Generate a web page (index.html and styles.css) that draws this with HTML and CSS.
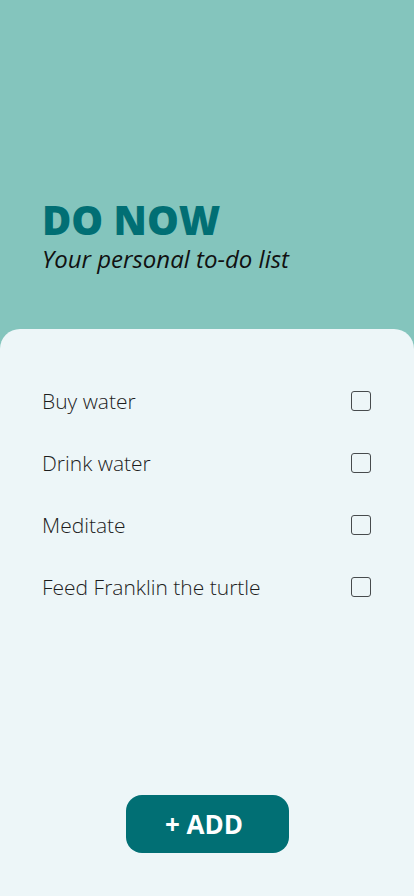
FILE: index.html
```html
<!DOCTYPE html>
<html lang="en">
<head>
<meta charset="utf-8">
<title>Do Now</title>
<link rel="stylesheet" href="styles.css">
</head>
<body>
<div class="app">
  <header class="header">
    <h1 class="title">DO NOW</h1>
    <p class="subtitle">Your personal to-do list</p>
  </header>
  <main class="card">
    <ul class="list">
      <li class="item"><span class="label">Buy water</span><span class="check"></span></li>
      <li class="item"><span class="label">Drink water</span><span class="check"></span></li>
      <li class="item"><span class="label">Meditate</span><span class="check"></span></li>
      <li class="item"><span class="label">Feed Franklin the turtle</span><span class="check"></span></li>
    </ul>
    <button class="add">+ ADD</button>
  </main>
</div>
</body>
</html>
```
FILE: styles.css
```css
html, body {
  margin: 0;
  padding: 0;
}
body {
  font-family: "Open Sans", "Noto Sans", sans-serif;
  background: #84c5bd;
}
.app {
  min-height: 896px;
  display: flex;
  flex-direction: column;
  background: #84c5bd;
}
.header {
  height: 329px;
  box-sizing: border-box;
  padding: 0 42px 56px;
  display: flex;
  flex-direction: column;
  justify-content: flex-end;
}
.title {
  margin: 0;
  font-size: 40px;
  line-height: 42px;
  font-weight: 800;
  color: #016f74;
}
.subtitle {
  margin: 4px 0 0;
  font-size: 24px;
  line-height: 28px;
  font-style: italic;
  color: #111;
}
.card {
  flex: 1;
  background: #edf6f8;
  border-radius: 20px 20px 0 0;
  display: flex;
  flex-direction: column;
  padding: 52px 42px 43px;
}
.list {
  list-style: none;
  margin: 0;
  padding: 0;
  display: flex;
  flex-direction: column;
  gap: 22px;
}
.item {
  height: 40px;
  display: flex;
  align-items: center;
  justify-content: space-between;
}
.label {
  font-size: 21px;
  font-weight: 300;
  color: #1d1d1d;
}
.check {
  width: 18px;
  height: 18px;
  border: 1.5px solid #474b4d;
  border-radius: 3px;
  margin-right: 1px;
}
.add {
  margin: auto auto 0;
  width: 163px;
  height: 58px;
  border: none;
  border-radius: 16px;
  background: #016f74;
  color: #fff;
  font-family: "Open Sans", "Noto Sans", sans-serif;
  font-size: 26px;
  font-weight: 700;
  padding: 0 6px 0 0;
}
```
